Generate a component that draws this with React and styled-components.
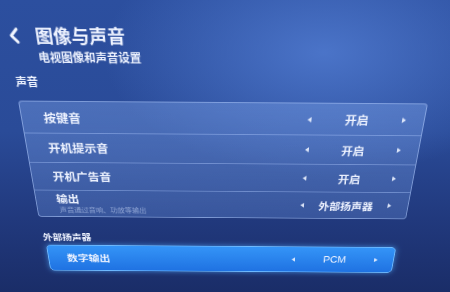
import styled, { createGlobalStyle } from 'styled-components'

const GlobalStyle = createGlobalStyle`
  html, body {
    margin: 0;
    height: 100%;
    overflow: hidden;
  }
  body {
    font-family: "Noto Sans CJK SC", "Noto Sans", sans-serif;
    color: #eef3ff;
    background:
      radial-gradient(ellipse 70% 60% at 72% 18%, rgba(78, 120, 205, 0.9), rgba(78, 120, 205, 0) 70%),
      linear-gradient(180deg, #2c4f9f 0%, #2a4b98 45%, #21397d 75%, #1a2d68 100%);
  }
`

// the photo is taken at an angle, so tilt the whole screen a bit
const Screen = styled.div`
  padding: 28px 22px 0 18px;
  transform: perspective(300px) rotateZ(0.4deg) rotateX(-15deg);
  transform-origin: 223px 102px;
`

const Header = styled.div`
  display: flex;
  align-items: flex-start;
`

const Back = styled.div`
  width: 25px;
  padding: 3px 0 0 2px;
  svg { display: block; }
`

const Titles = styled.div`
  display: flex;
  flex-direction: column;
`

const Title = styled.div`
  font-size: 17px;
  line-height: 20px;
  font-weight: 700;
`

const Subtitle = styled.div`
  margin-top: 3px;
  font-size: 11px;
  line-height: 14px;
  font-weight: 600;
`

const SectionTitle = styled.div`
  margin: ${p => p.$top}px 0 0 1px;
  font-size: 11px;
  line-height: 14px;
  font-weight: 700;
`

const Panel = styled.div`
  margin-top: 13px;
  border: 1px solid rgba(175, 200, 250, 0.55);
  border-radius: 4px;
  background: linear-gradient(180deg, rgba(120, 158, 228, 0.42), rgba(105, 145, 220, 0.32));
`

const Row = styled.div`
  display: flex;
  align-items: center;
  justify-content: space-between;
  height: 33px;
  padding: 0 18px 0 22px;
  & + & {
    border-top: 1px solid rgba(170, 198, 250, 0.45);
    height: 32px;
  }
`

const Label = styled.div`
  display: flex;
  flex-direction: column;
  gap: 2px;
`

const Name = styled.div`
  font-size: 12.5px;
  line-height: 14px;
  font-weight: 600;
`

const Hint = styled.div`
  padding-left: 2px;
  font-size: 8px;
  line-height: 10px;
  color: rgba(205, 220, 250, 0.6);
`

const Value = styled.div`
  display: flex;
  align-items: center;
  justify-content: space-between;
  width: 100px;
  font-size: 12px;
  font-weight: 600;
`

const Arrow = styled.span`
  width: 0;
  height: 0;
  border-top: 3px solid transparent;
  border-bottom: 3px solid transparent;
  ${p => p.$dir === 'left'
    ? 'border-right: 4px solid rgba(235, 242, 255, 0.9);'
    : 'border-left: 4px solid rgba(235, 242, 255, 0.9);'}
`

const Selected = styled(Row)`
  margin: 4px 5px 0 3px;
  height: 34px;
  padding-left: 21px;
  border: 1px solid #6fbaff;
  border-radius: 5px;
  background: linear-gradient(180deg, #3494f7, #1f72e2);
  box-shadow: 0 0 7px rgba(80, 170, 255, 0.7);
`

const Setting = ({ name, hint, value }) => (
  <Row>
    <Label>
      <Name>{name}</Name>
      {hint && <Hint>{hint}</Hint>}
    </Label>
    <Value>
      <Arrow $dir="left" />
      <span>{value}</span>
      <Arrow $dir="right" />
    </Value>
  </Row>
)

const rows = [
  { name: '按键音', value: '开启' },
  { name: '开机提示音', value: '开启' },
  { name: '开机广告音', value: '开启' },
  { name: '输出', hint: '声音通过音响、功放等输出', value: '外部扬声器' },
]

export default function App() {
  return (
    <>
      <GlobalStyle />
      <Screen>
        <Header>
          <Back>
            <svg width="10" height="15" viewBox="0 0 10 15">
              <polyline points="8,1.5 2.5,7.5 8,13.5" fill="none" stroke="#f2f6ff" strokeWidth="2.6" strokeLinecap="round" strokeLinejoin="round" />
            </svg>
          </Back>
          <Titles>
            <Title>图像与声音</Title>
            <Subtitle>电视图像和声音设置</Subtitle>
          </Titles>
        </Header>
        <SectionTitle $top={10}>声音</SectionTitle>
        <Panel>
          {rows.map(r => <Setting key={r.name} {...r} />)}
        </Panel>
        <SectionTitle $top={19}>外部扬声器</SectionTitle>
        <Selected>
          <Name>数字输出</Name>
          <Value>
            <Arrow $dir="left" />
            <span style={{ fontFamily: '"Liberation Sans", sans-serif', fontWeight: 400 }}>PCM</span>
            <Arrow $dir="right" />
          </Value>
        </Selected>
      </Screen>
    </>
  )
}
